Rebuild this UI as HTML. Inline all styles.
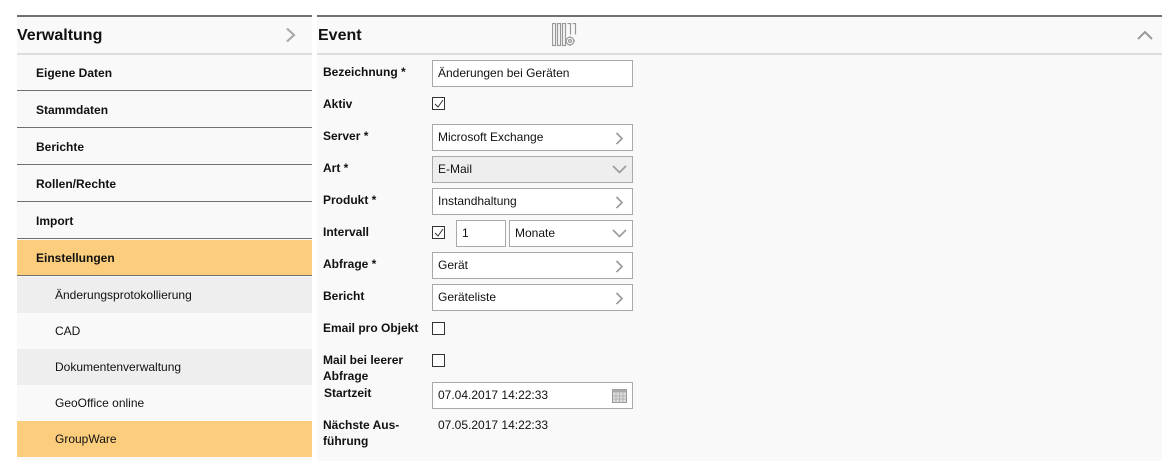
<!DOCTYPE html><html><head><meta charset="utf-8"><style>
*{margin:0;padding:0;box-sizing:border-box}
body{width:1166px;height:461px;background:#fff;font-family:"Liberation Sans",Arial,sans-serif;position:relative;overflow:hidden;color:#111}
.a{position:absolute}
.side{left:17px;top:15px;width:295px;height:446px;background:#f9f9f9;border-top:2px solid #707070}
.main{left:317px;top:15px;width:845px;height:446px;background:#f9f9f9;border-top:2px solid #707070}
.it{position:absolute;left:0;width:295px;font-size:12px;font-weight:bold;padding-left:19px;display:flex;align-items:center}
.sub{position:absolute;left:0;width:295px;font-size:12px;padding-left:38px;display:flex;align-items:center}
.lb{position:absolute;left:323px;font-size:12px;font-weight:bold;line-height:16px;margin-top:-1px}
.in{position:absolute;left:432px;width:201px;height:27px;border:1px solid #a9a9a9;background:#fff;font-size:12px;padding-left:5px;line-height:25px}
.cb{position:absolute;left:432px;width:13px;height:13px;border:1px solid #333;background:#fff}
.chev{position:absolute;right:8px;top:7px}
</style></head><body>
<div class="a side"></div>
<div class="a main"></div>
<div class="a" style="left:17px;top:27px;font-size:16px;font-weight:bold">Verwaltung</div>
<svg class="a" style="left:285px;top:27px" width="12" height="16"><path d="M2 1.5l7 6.5-7 6.5" fill="none" stroke="#aaa" stroke-width="2.2"/></svg>
<div class="a" style="left:17px;top:53px;width:295px;height:2px;background:#ddd"></div>
<div class="it" style="left:17px;top:55px;height:36px;border-bottom:1px solid #707070">Eigene Daten</div>
<div class="it" style="left:17px;top:92px;height:36px;border-bottom:1px solid #707070">Stammdaten</div>
<div class="it" style="left:17px;top:129px;height:36px;border-bottom:1px solid #707070">Berichte</div>
<div class="it" style="left:17px;top:166px;height:36px;border-bottom:1px solid #707070">Rollen/Rechte</div>
<div class="it" style="left:17px;top:203px;height:36px;border-bottom:1px solid #707070">Import</div>
<div class="it" style="left:17px;top:240px;height:36px;background:#fbcd7c;border-bottom:1px solid #707070">Einstellungen</div>
<div class="sub" style="left:17px;top:277px;height:36px;background:#eeeeee">Änderungsprotokollierung</div>
<div class="sub" style="left:17px;top:313px;height:36px">CAD</div>
<div class="sub" style="left:17px;top:349px;height:36px;background:#eeeeee">Dokumentenverwaltung</div>
<div class="sub" style="left:17px;top:385px;height:36px">GeoOffice online</div>
<div class="sub" style="left:17px;top:421px;height:36px;background:#fbcd7c">GroupWare</div>

<div class="a" style="left:318px;top:27px;font-size:16px;font-weight:bold">Event</div>
<svg class="a" style="left:552px;top:23px" width="26" height="24"><g fill="none" stroke="#999" stroke-width="1.2"><rect x="0.5" y="0.5" width="3" height="22"/><rect x="5.5" y="0.5" width="3" height="22"/><rect x="10.5" y="0.5" width="3" height="22"/><path d="M15.5 0.5h3v11M20.5 0.5h3v11"/><circle cx="18" cy="18" r="3.8"/><circle cx="18" cy="18" r="1.4"/><path d="M18 13v1.5M18 21.5v1.5M13 18h1.5M21.5 18h1.5"/></g></svg>
<svg class="a" style="left:1137px;top:29px" width="16" height="12"><path d="M1 10l7-7 7 7" fill="none" stroke="#999" stroke-width="2"/></svg>
<div class="a" style="left:317px;top:53px;width:845px;height:2px;background:#ddd"></div>

<div class="lb" style="top:65px">Bezeichnung *</div><div class="in" style="top:60px">Änderungen bei Geräten</div>
<div class="lb" style="top:97px">Aktiv</div>
<div class="cb" style="top:97px"><svg width="11" height="11" style="position:absolute;left:0;top:0"><path d="M2 6l3 3 5-7" fill="none" stroke="#333" stroke-width="1"/></svg></div>
<div class="lb" style="top:129px">Server *</div><div class="in" style="top:124px">Microsoft Exchange<svg class="chev" width="9" height="13"><path d="M1.5 1l5.5 5.5-5.5 5.5" fill="none" stroke="#999" stroke-width="1.6"/></svg></div>
<div class="lb" style="top:161px">Art *</div><div class="in" style="top:156px;background:#eee">E-Mail<svg class="a" style="right:5px;top:8px" width="15" height="9"><path d="M1 1l6.5 6.5 6.5-6.5" fill="none" stroke="#999" stroke-width="1.6"/></svg></div>
<div class="lb" style="top:193px">Produkt *</div><div class="in" style="top:188px">Instandhaltung<svg class="chev" width="9" height="13"><path d="M1.5 1l5.5 5.5-5.5 5.5" fill="none" stroke="#999" stroke-width="1.6"/></svg></div>
<div class="lb" style="top:225px">Intervall</div>
<div class="cb" style="top:226px"><svg width="11" height="11" style="position:absolute;left:0;top:0"><path d="M2 6l3 3 5-7" fill="none" stroke="#333" stroke-width="1"/></svg></div>
<div class="in" style="top:220px;left:456px;width:50px">1</div>
<div class="in" style="top:220px;left:509px;width:124px">Monate<svg class="a" style="right:5px;top:8px" width="15" height="9"><path d="M1 1l6.5 6.5 6.5-6.5" fill="none" stroke="#999" stroke-width="1.6"/></svg></div>
<div class="lb" style="top:257px">Abfrage *</div><div class="in" style="top:252px">Gerät<svg class="chev" width="9" height="13"><path d="M1.5 1l5.5 5.5-5.5 5.5" fill="none" stroke="#999" stroke-width="1.6"/></svg></div>
<div class="lb" style="top:289px">Bericht</div><div class="in" style="top:284px">Geräteliste<svg class="chev" width="9" height="13"><path d="M1.5 1l5.5 5.5-5.5 5.5" fill="none" stroke="#999" stroke-width="1.6"/></svg></div>
<div class="lb" style="top:321px">Email pro Objekt</div><div class="cb" style="top:322px"></div>
<div class="lb" style="top:353px">Mail bei leerer<br>Abfrage</div><div class="cb" style="top:354px"></div>
<div class="lb" style="top:386px;left:324px">Startzeit</div><div class="in" style="top:382px">07.04.2017 14:22:33<svg class="a" style="right:5px;top:5px" width="15" height="15"><rect x="0.5" y="1.5" width="14" height="13" fill="#ddd" stroke="#999"/><rect x="0.5" y="1.5" width="14" height="3" fill="#aaa"/><path d="M4 5v10M7.5 5v10M11 5v10M1 8h13M1 11h13" stroke="#aaa" stroke-width="0.8"/></svg></div>
<div class="lb" style="top:418px">Nächste Aus-<br>führung</div>
<div class="a" style="left:438px;top:418px;font-size:12px">07.05.2017 14:22:33</div>
</body></html>
